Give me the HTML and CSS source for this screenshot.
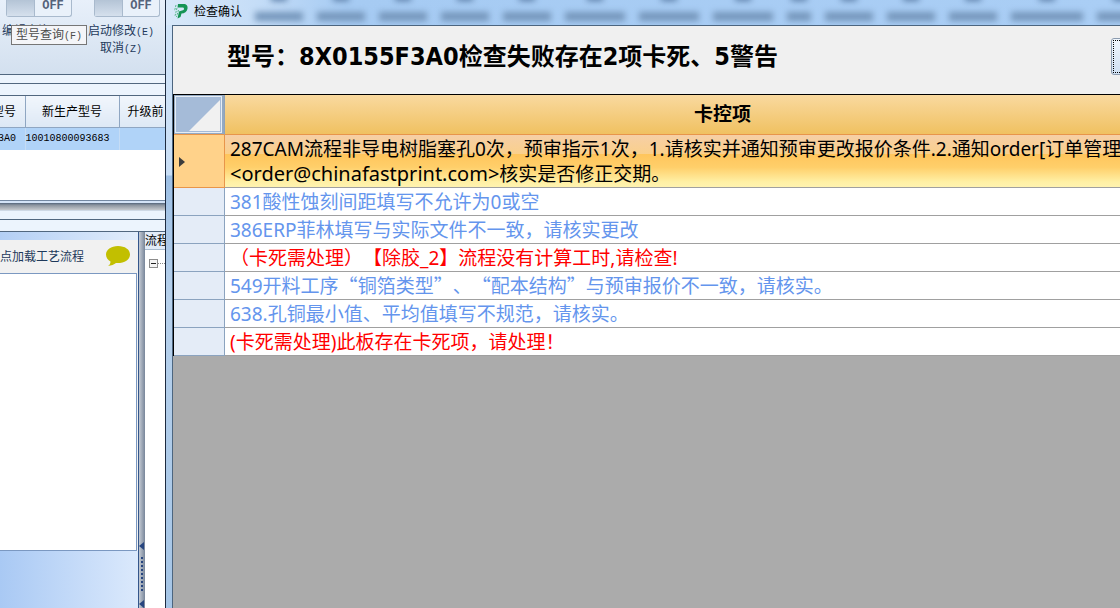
FILE: index.html
```
<!DOCTYPE html>
<html lang="zh-CN">
<head>
    <meta charset="UTF-8">
    <meta name="viewport" content="width=device-width, initial-scale=1.0">
    <title>检查确认</title>
    <link rel="stylesheet" href="styles.css">
</head>
<body>
    <div class="screen">
        <div class="host">
            <div class="toolbar">
                <div class="switches">
                    <button class="switch" id="edit-switch"><span class="knob"></span><span class="state">OFF</span></button>
                    <button class="switch" id="modify-switch"><span class="knob"></span><span class="state">OFF</span></button>
                </div>
                <div class="switch-labels">
                    <label for="edit-switch">编辑查询<span class="key">(F)</span></label>
                    <label for="modify-switch">启动修改<span class="key">(E)</span><br>取消<span class="key">(Z)</span></label>
                </div>
                <div class="tooltip">型号查询<span class="key">(F)</span></div>
            </div>
            <div class="band"></div>
            <div class="band tall"></div>
            <div class="orders">
                <table>
                    <thead>
                        <tr><th class="old"><span>生产型号</span></th><th class="new">新生产型号</th><th class="before">升级前</th></tr>
                    </thead>
                    <tbody>
                        <tr><td class="old"><span>8X0155F3A0</span></td><td>10010800093683</td><td></td></tr>
                    </tbody>
                </table>
            </div>
            <div class="splitter-h"></div>
            <div class="band"></div>
            <div class="band tall"></div>
            <div class="lower">
                <div class="process">
                    <div class="process-cap"></div>
                    <div class="process-head">
                        <span>点加载工艺流程</span>
                        <svg class="bubble" width="26" height="22" viewBox="0 0 26 22">
                            <path d="M13 1C6 1 1 5 1 9.500C1 13 3 15 5.500 16.500C5.500 18.500 4.500 20 3 21C6.500 20.700 9 19.500 11 18C19 18.500 25 15 25 9.500C25 4.500 20 1 13 1Z" fill="#c2bf00"/>
                        </svg>
                    </div>
                    <div class="process-list"></div>
                    <div class="process-foot"></div>
                </div>
                <div class="splitter-v">
                    <svg width="6" height="66" viewBox="0 0 6 66">
                        <path d="M5 0V8L0 4ZM5 58V66L0 62Z" fill="#27457f"/>
                        <path d="M3 15V50" stroke="#27457f" stroke-width="2" stroke-dasharray="2 2"/>
                    </svg>
                </div>
                <div class="tree">
                    <div class="tree-head">流程</div>
                    <svg width="20" height="28" viewBox="0 0 20 28">
                        <rect x="4.500" y="9.500" width="8" height="8" fill="#f4f4f4" stroke="#8c8c8c"/>
                        <path d="M6 13.500H11" stroke="#222"/>
                        <path d="M13 13.500H20" stroke="#888" stroke-dasharray="1 1"/>
                    </svg>
                </div>
            </div>
        </div>

        <div class="dialog">
            <div class="titlebar">
                <svg class="logo" width="16" height="16" viewBox="0 0 16 16">
                    <path d="M5 1H10.500C13.500 1 15 3 14.500 5.800C14 9 11.500 10.500 8.500 10.500L7.500 14L4.500 15.500L6 8.500L9 7.500C10.300 7.300 11 6.800 11 5.800C11 4.800 10.300 4.500 9.500 4.500H4.500Z" fill="#159455"/>
                    <path d="M3 2L1.500 8M4 5L2 13M5.500 7L3.500 14" stroke="#56b98a" stroke-dasharray="2 1"/>
                </svg>
                <span class="caption">检查确认</span>
                <div class="glass">
                    <i></i><i></i><i></i><i></i><i></i><i class="long"></i><i class="long"></i><i class="long"></i><i class="short"></i><i></i><i></i><i></i><i class="longer"></i><i></i>
                </div>
            </div>
            <div class="content">
                <div class="summary">
                    <h1>型号<span class="mid">：</span><span class="num">8X0155F3A0</span>检查失败存在<span class="num">2</span>项卡死、<span class="num">5</span>警告</h1>
                    <button class="confirm" aria-label="确认"><span></span></button>
                </div>
                <table class="checks">
                    <thead>
                        <tr>
                            <th class="corner">
                                <svg width="50" height="39" viewBox="0 0 50 39">
                                    <rect width="50" height="39" fill="#93a9c2"/>
                                    <rect x="1.500" y="1.500" width="46" height="36" fill="#a5bbd8" stroke="#e6edf5"/>
                                    <path d="M46 5V36H15Z" fill="#f1f1f1"/>
                                </svg>
                            </th>
                            <th>卡控项</th>
                        </tr>
                    </thead>
                    <tbody>
                        <tr class="current">
                            <td class="marker"><svg width="6" height="10" viewBox="0 0 6 10"><path d="M0 0L6 5L0 10Z" fill="#3c3c3c"/></svg></td>
                            <td>287CAM流程非导电树脂塞孔0次，预审指示1次，1.请核实并通知预审更改报价条件.2.通知order[订单管理<br><span class="mail">&lt;order@chinafastprint.com&gt;</span>核实是否修正交期。</td>
                        </tr>
                        <tr class="warn"><td></td><td>381酸性蚀刻间距填写不允许为0或空</td></tr>
                        <tr class="warn"><td></td><td>386ERP菲林填写与实际文件不一致，请核实更改</td></tr>
                        <tr class="block"><td></td><td>（卡死需处理<span class="mid">）</span>【除胶_2】流程没有计算工时,请检查!</td></tr>
                        <tr class="warn"><td></td><td>549开料工序<q>铜箔类型</q>、<q>配本结构</q>与预审报价不一致，请核实。</td></tr>
                        <tr class="warn"><td></td><td>638.孔铜最小值、平均值填写不规范，请核实。</td></tr>
                        <tr class="block"><td></td><td>(卡死需处理)此板存在卡死项，请处理<span class="mid">！</span></td></tr>
                    </tbody>
                </table>
            </div>
        </div>
    </div>
</body>
</html>
```
FILE: styles.css
```
* {
    box-sizing: border-box;
}

body {
    margin: 0;
    font-family: "Noto Sans", "Noto Sans CJK SC", sans-serif;
    font-size: 12px;
    color: #000;
    text-spacing-trim: space-all;
}

button {
    padding: 0;
    font: inherit;
}

svg {
    display: block;
    flex: none;
}

table {
    border-collapse: collapse;
}

.screen {
    display: flex;
    height: 100vh;
    overflow: hidden;
}

/* main window behind the dialog */
.host {
    flex: none;
    width: 166px;
    display: flex;
    flex-direction: column;
    overflow: hidden;
    border-right: 1px solid #1d2b40;
    background: #eaf2fc;
}

.toolbar {
    position: relative;
    height: 75px;
    border-bottom: 1px solid #51677f;
    background: linear-gradient(#e8f0fa, #d3e0ef);
}

.switches {
    display: flex;
    gap: 22px;
    padding-left: 6px;
}

.switch {
    display: flex;
    flex: none;
    width: 66px;
    height: 17px;
    border: 1px solid #a9bacd;
    border-top: 0;
    border-radius: 0 0 3px 3px;
    background: #e9f1fa;
}

.knob {
    width: 28px;
    height: 16px;
    border-right: 1px solid #a9bacd;
    background: linear-gradient(#b4c4d6, #d5e0ed);
}

.state {
    flex: 1;
    font: bold 12px/12px "Liberation Mono", monospace;
    color: #55637a;
}

.switch-labels {
    display: flex;
    gap: 20px;
    padding: 5px 0 0 2px;
    line-height: 17px;
    text-align: center;
    color: #1e395b;
}

.switch-labels label {
    width: 66px;
    white-space: nowrap;
}

.key {
    font-family: "Liberation Mono", monospace;
    font-size: 10px;
    line-height: 10px;
}

.tooltip {
    position: absolute;
    left: 11px;
    top: 25px;
    width: 76px;
    height: 20px;
    border: 1px solid #767676;
    background: #f4f5f8;
    color: #4c4c4c;
    line-height: 17px;
    text-align: center;
    white-space: nowrap;
}

.band {
    flex: none;
    height: 9px;
    border-bottom: 1px solid #51677f;
    background: #ecf4fd;
}

.band.tall {
    height: 12px;
}

.orders {
    height: 105px;
    border-bottom: 1px solid #7388a3;
    background: #fff;
}

.orders table {
    table-layout: fixed;
    width: 166px;
}

.orders th {
    height: 31px;
    padding: 0;
    border-right: 1px solid #8fa6c2;
    border-bottom: 1px solid #8fa6c2;
    background: linear-gradient(#f1f6fc, #dde8f5);
    font-weight: normal;
    white-space: nowrap;
}

.orders td {
    height: 23px;
    padding: 0;
    border-right: 1px solid #c5dcf5;
    background: #b0d3f8;
    font: 10px "Liberation Mono", monospace;
    white-space: nowrap;
}

.orders .old {
    width: 25px;
}

.orders .new {
    width: 94px;
}

.orders .before {
    padding-left: 8px;
    text-align: left;
}

/* scrolled column, only its end is visible */
.old span {
    display: flex;
    justify-content: flex-end;
    width: 16px;
}

.splitter-h {
    flex: none;
    height: 10px;
    border-top: 2px solid #d3e3f7;
    border-bottom: 1px solid #cfd9e5;
    background: linear-gradient(#53657c, #8b949f 30%, #c5c9ce);
}

.lower {
    flex: 1;
    display: flex;
    min-height: 0;
}

.process {
    flex: none;
    width: 139px;
    display: flex;
    flex-direction: column;
    border-right: 1px solid #34568b;
    background: #f1f1f1;
}

.process-cap {
    height: 8px;
    background: linear-gradient(90deg, #b3cff5, #e2edfb);
}

.process-head {
    display: flex;
    justify-content: space-between;
    align-items: center;
    height: 33px;
    padding: 0 7px 2px 0;
    color: #1e395b;
}

.process-list {
    flex: 1;
    margin-right: 1px;
    border: 1px solid #7b98c1;
    border-left: 0;
    background: #fff;
}

.process-foot {
    height: 57px;
    background: linear-gradient(90deg, #a9c9f4, #dbe9fc);
}

.splitter-v {
    flex: none;
    display: flex;
    align-items: flex-end;
    width: 6px;
    background: linear-gradient(90deg, #c5cbd4, #78869a);
}

.tree {
    flex: 1;
    overflow: hidden;
    background: #fff;
}

.tree-head {
    height: 18px;
    border-bottom: 1px solid #a9bccf;
    background: #e2ecf8;
    line-height: 17px;
    white-space: nowrap;
}

/* check result dialog, runs past the right edge of the screen */
.dialog {
    flex: 1;
    min-width: 0;
    display: flex;
    flex-direction: column;
    padding-left: 6px;
    background: linear-gradient(#d3e6fa, #c9def5 175px, #9dbfe4 176px, #b7d1ec 300px, #a5c5e6);
}

.titlebar {
    flex: none;
    display: flex;
    align-items: center;
    height: 25px;
    margin-left: -6px;
    padding: 0 0 4px 7px;
    overflow: hidden;
    background: linear-gradient(90deg, #d8e8f9, #c5ddf7 90px, #a6cbf3 180px, #aacef5);
}

.caption {
    margin-left: 5px;
    flex: none;
    white-space: nowrap;
}

/* toolbar of the window behind, seen through the glass */
.glass {
    display: flex;
    gap: 14px;
    margin-left: 13px;
    padding-top: 12px;
    filter: blur(3px);
}

.glass i {
    position: relative;
    flex: none;
    width: 48px;
    height: 9px;
    background: #7596bb;
}

.glass i::before {
    content: "";
    position: absolute;
    left: calc(50% - 8px);
    top: -18px;
    width: 16px;
    height: 7px;
    background: #5d7fa8;
}

.glass .short {
    width: 24px;
}

.glass .long {
    width: 60px;
}

.glass .longer {
    width: 72px;
}

.content {
    flex: 1;
    width: calc(100% + 100px);
    border-top: 1px solid #4c657f;
    border-left: 1px solid #4c657f;
    background: #ababab;
}

.summary {
    display: flex;
    justify-content: space-between;
    align-items: flex-start;
    height: 69px;
    padding: 12px 0 0 54px;
    border-bottom: 1px solid #000;
    background: #f0f0f0;
}

h1 {
    margin: 0;
    font-size: 24px;
    line-height: 36px;
    white-space: nowrap;
}

.num {
    font-family: "DejaVu Sans Condensed", "DejaVu Sans", sans-serif;
    font-size: 25px;
    line-height: 25px;
}

/* punctuation centred in its square */
.mid {
    font-family: "Noto Sans CJK TC", sans-serif;
    line-height: 1;
}

q {
    quotes: "“" "”";
}

q::before,
q::after {
    font-family: "Noto Sans CJK SC", sans-serif;
    line-height: 1;
}

.mail {
    font-size: 20px;
    line-height: 20px;
}

.confirm {
    width: 109px;
    height: 37px;
    padding: 1px;
    border: 1px solid #8c9cb0;
    border-radius: 3px;
    background: linear-gradient(#f0f6fd, #cfe0f3);
}

.confirm span {
    display: block;
    height: 100%;
    border: 1px dotted #000;
}

.checks {
    width: 100%;
    border-collapse: separate;
    border-spacing: 0;
    border-left: 1px solid #000;
    font-size: 19px;
    line-height: 25px;
    white-space: nowrap;
}

.checks th {
    height: 40px;
    padding: 0;
    border-bottom: 1px solid #e8954a;
    background: linear-gradient(#f9d99f, #f0c161);
}

.checks .corner {
    width: 51px;
    border-right: 1px solid #8fa3ba;
}

.checks td {
    height: 28px;
    padding: 2px 0 0 5px;
    border-bottom: 1px solid #a0a0a0;
    background: #fff;
}

.checks td:first-child {
    border-right: 1px solid #8ba3bf;
    border-bottom-color: #8ba3bf;
    background: #e4ecf7;
}

.checks .current td {
    height: 53px;
    background: linear-gradient(#f6cfa6, #fad08c 36%, #ffc55c 37%, #ffcf6a 62%, #fff0a5 90%, #fff3b0);
}

.checks .current .marker {
    border-color: #e8954a;
    background: #ffd28a;
}

.warn {
    color: #6495ed;
}

.block {
    color: #f00;
}
```
